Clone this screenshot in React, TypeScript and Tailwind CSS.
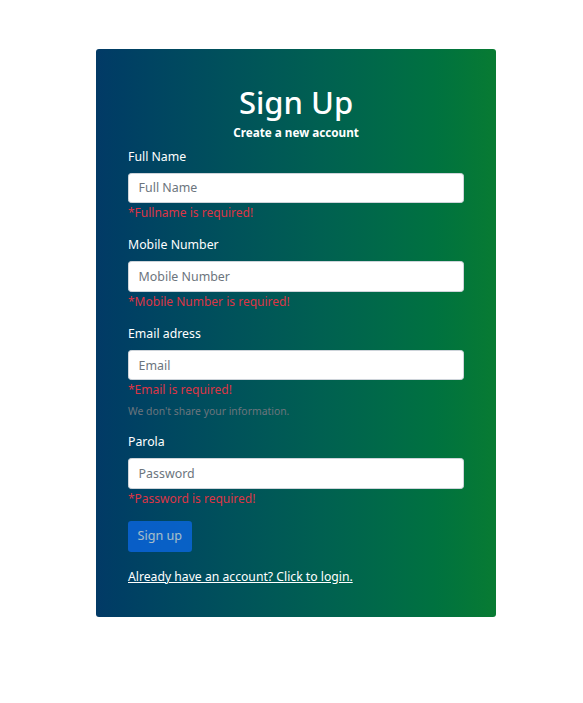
import React, { FC } from "react";

interface FieldProps {
  label: string;
  placeholder: string;
  type?: string;
  error: string;
  hint?: string;
}

const Field: FC<FieldProps> = ({ label, placeholder, type, error, hint }) => {
  return (
    <div className="mb-[12.8px]">
      <label className="block mb-[6.4px] text-[12.3px] leading-[19.5px] text-white">
        {label}
      </label>
      <input
        type={type ? type : "text"}
        placeholder={placeholder}
        className="block w-full h-[30.4px] px-[9.6px] rounded-[3.2px] border border-[#ced4da] bg-white text-[12.4px] text-[#212529] placeholder:text-[#6c757d] outline-none"
      />
      <div className="text-[12px] leading-[19.5px] text-[#dc3545]">{error}</div>
      {hint && (
        <div className="mt-[4px] text-[10.4px] leading-[15.6px] text-[#6c757d]">
          {hint}
        </div>
      )}
    </div>
  );
};

const App: FC = () => {
  return (
    <div
      className="min-h-[703px] w-full bg-white pt-[49px]"
      style={{ fontFamily: '"Segoe UI", "Noto Sans", "Open Sans", sans-serif' }}
    >
      <div className="ml-[96px] w-[400px] rounded-[3px] bg-gradient-to-r from-[#023a66] to-[#087b32] px-8 pt-[34px] pb-[31px]">
        <h1 className="text-center text-[31px] leading-[38.4px] font-medium text-white">
          Sign Up
        </h1>
        <p className="mt-[2px] mb-[4px] text-center text-[11.7px] leading-[19.5px] font-bold text-white">
          Create a new account
        </p>

        <form>
          <Field
            label="Full Name"
            placeholder="Full Name"
            error="*Fullname is required!"
          />
          <Field
            label="Mobile Number"
            placeholder="Mobile Number"
            error="*Mobile Number is required!"
          />
          <Field
            label="Email adress"
            placeholder="Email"
            type="email"
            error="*Email is required!"
            hint="We don't share your information."
          />
          <Field
            label="Parola"
            placeholder="Password"
            type="password"
            error="*Password is required!"
          />

          <button
            type="submit"
            disabled
            className="h-[31px] px-[9.6px] rounded-[3.2px] bg-[#0d6efd] text-[12.6px] text-white opacity-65"
          >
            Sign up
          </button>

          <p className="mt-[15px] text-[12.2px] leading-[19.5px]">
            <a href="#" className="text-white underline">
              Already have an account? Click to login.
            </a>
          </p>
        </form>
      </div>
    </div>
  );
};

export default App;
